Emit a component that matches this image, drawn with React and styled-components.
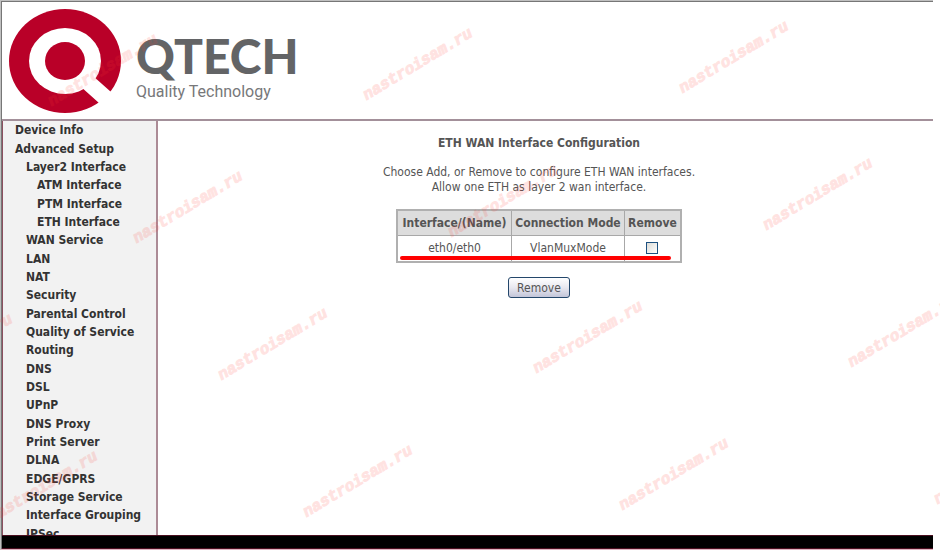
// App.jsx
import React, { useState } from "react";
import styled, { createGlobalStyle } from "styled-components";

const GlobalStyle = createGlobalStyle`
  * {
    box-sizing: border-box;
  }
  body {
    margin: 0;
    background: #ffffff;
    color: #555555;
    font-family: Tahoma, "DejaVu Sans Condensed", "DejaVu Sans", sans-serif;
    font-size: 12px;
  }
`;

const Page = styled.div`
  position: relative;
  display: flex;
  flex-direction: column;
  height: 100vh;
  padding-right: 7px;
  overflow: hidden;
`;

const Frame = styled.div`
  display: flex;
  flex: 1;
  flex-direction: column;
  min-height: 0;
  border-top: 1px solid #c0c0c0;
  border-left: 1px solid #c0c0c0;
  border-bottom: 1px solid #dfb3bf;
`;

const FrameInner = styled.div`
  display: flex;
  flex: 1;
  flex-direction: column;
  min-height: 0;
  border-top: 1px solid #777777;
  border-left: 1px solid #777777;
`;

const Header = styled.header`
  display: flex;
  gap: 14px;
  height: 119px;
  padding: 7px 6px 4px;
  border-bottom: 2px solid #a3909a;
`;

const Mark = styled.svg`
  width: 114px;
  height: 106px;
`;

const Brand = styled.div`
  display: flex;
  flex-direction: column;
  padding-top: 23px;
  color: #636466;
`;

const BrandName = styled.div`
  font: 900 48px/48px Lato, sans-serif;
`;

const Tagline = styled.div`
  font: 400 16px/24px Roboto, sans-serif;
  color: #77787a;
`;

const Body = styled.div`
  display: flex;
  flex: 1;
  min-height: 0;
`;

const Sidebar = styled.nav`
  flex: 0 0 156px;
  overflow: hidden;
  background: #f2f2f2;
  border-left: 1px solid #8c5060;
  border-right: 2px solid #ac8b96;
`;

const Menu = styled.ul`
  display: grid;
  grid-auto-rows: 1fr;
  align-items: center;
  min-height: 422px;
  margin: 0;
  padding: 0 0 0 12px;
  list-style: none;
`;

const MenuItem = styled.li`
  padding-left: ${(props) => props.$level * 11}px;
`;

const MenuLink = styled.a`
  display: block;
  color: #333333;
  font-weight: bold;
  line-height: 18px;
  text-decoration: none;
  white-space: nowrap;
`;

const Content = styled.main`
  display: flex;
  flex: 1;
  flex-direction: column;
  align-items: center;
  padding: 14px 13px 0 0;
`;

const Title = styled.h1`
  margin: 0;
  font-size: 12px;
  line-height: 16px;
`;

const Intro = styled.p`
  margin: 14px 0;
  line-height: 15px;
  text-align: center;
`;

const TableWrap = styled.div`
  position: relative;
`;

const Table = styled.table`
  border-collapse: collapse;
  border: 2px solid #b0b0b0;
  text-align: center;
`;

const HeadCell = styled.th`
  min-width: ${(props) => props.$width}px;
  height: 25px;
  padding: 0 3px;
  background: #dddddd;
  border: 1px solid #a8a8a8;
`;

const Cell = styled.td`
  height: 27px;
  padding: 0 3px;
  border: 1px solid #a8a8a8;
`;

const Check = styled.input`
  appearance: none;
  display: block;
  width: 12px;
  height: 12px;
  margin: 0 auto;
  border: 1px solid #1d5180;
  background: linear-gradient(135deg, #dcdcd7, #ffffff);
  &:checked {
    background: #21a121;
  }
`;

// red marker line drawn over the bottom of the table
const Underline = styled.div`
  position: absolute;
  left: 4px;
  right: 11px;
  bottom: 3px;
  height: 4px;
  border-radius: 2px;
  background: #ff0000;
`;

const Button = styled.button`
  height: 21px;
  margin-top: 14px;
  padding: 0 8px;
  border: 1px solid #24476b;
  border-radius: 3px;
  background: linear-gradient(#ffffff, #e8e8f0 50%, #c3c5d8);
  color: #555555;
  font: inherit;
`;

const Footer = styled.footer`
  height: 14px;
  background: #000000;
  border-top: 1px solid #4a0f20;
  border-bottom: 1px solid #4a0f20;
`;

const Watermarks = styled.svg`
  position: absolute;
  top: 0;
  left: 0;
  width: 100%;
  height: 100%;
  pointer-events: none;
  opacity: 0.14;
  text {
    fill: #ff3c32;
    stroke: #ff3c32;
    stroke-width: 1px;
    font: italic bold 16px "Liberation Mono", monospace;
    text-anchor: middle;
  }
`;

const menu = [
  ["Device Info", 0],
  ["Advanced Setup", 0],
  ["Layer2 Interface", 1],
  ["ATM Interface", 2],
  ["PTM Interface", 2],
  ["ETH Interface", 2],
  ["WAN Service", 1],
  ["LAN", 1],
  ["NAT", 1],
  ["Security", 1],
  ["Parental Control", 1],
  ["Quality of Service", 1],
  ["Routing", 1],
  ["DNS", 1],
  ["DSL", 1],
  ["UPnP", 1],
  ["DNS Proxy", 1],
  ["Print Server", 1],
  ["DLNA", 1],
  ["EDGE/GPRS", 1],
  ["Storage Service", 1],
  ["Interface Grouping", 1],
  ["IPSec", 1],
];

const marks = [
  [105, 74],
  [420, 68],
  [736, 61],
  [190, 211],
  [505, 205],
  [820, 198],
  [-40, 354],
  [275, 348],
  [590, 341],
  [905, 335],
  [45, 491],
  [360, 485],
  [676, 478],
  [991, 472],
];

const Logo = () => (
  <Mark viewBox="0 0 114 106" role="img" aria-label="QTECH">
    <ellipse cx="57" cy="52" rx="56" ry="52" fill="#b90028" />
    <ellipse cx="57" cy="52" rx="36" ry="33" fill="#ffffff" />
    <ellipse cx="57" cy="52" rx="20" ry="19" fill="#b90028" />
    <path d="M72 77 L91 94 L99 103 L114 93 L103 83 L85 67 Z" fill="#ffffff" />
  </Mark>
);

const App = () => {
  const [checked, setChecked] = useState(false);

  return (
    <>
      <GlobalStyle />
      <Page>
        <Frame>
          <FrameInner>
            <Header>
              <Logo />
              <Brand>
                <BrandName>QTECH</BrandName>
                <Tagline>Quality Technology</Tagline>
              </Brand>
            </Header>
            <Body>
              <Sidebar>
                <Menu>
                  {menu.map(([label, level]) => (
                    <MenuItem key={label} $level={level}>
                      <MenuLink href="#">{label}</MenuLink>
                    </MenuItem>
                  ))}
                </Menu>
              </Sidebar>
              <Content>
                <Title>ETH WAN Interface Configuration</Title>
                <Intro>
                  Choose Add, or Remove to configure ETH WAN interfaces.
                  <br />
                  Allow one ETH as layer 2 wan interface.
                </Intro>
                <TableWrap>
                  <Table>
                    <thead>
                      <tr>
                        <HeadCell $width={115}>Interface/(Name)</HeadCell>
                        <HeadCell $width={111}>Connection Mode</HeadCell>
                        <HeadCell $width={57}>Remove</HeadCell>
                      </tr>
                    </thead>
                    <tbody>
                      <tr>
                        <Cell>eth0/eth0</Cell>
                        <Cell>VlanMuxMode</Cell>
                        <Cell>
                          <Check
                            type="checkbox"
                            aria-label="Remove eth0/eth0"
                            checked={checked}
                            onChange={(e) => setChecked(e.target.checked)}
                          />
                        </Cell>
                      </tr>
                    </tbody>
                  </Table>
                  <Underline />
                </TableWrap>
                <Button type="button">Remove</Button>
              </Content>
            </Body>
            <Footer />
          </FrameInner>
        </Frame>
        <Watermarks aria-hidden="true">
          {marks.map(([x, y]) => (
            <text key={`${x}-${y}`} transform={`translate(${x} ${y}) rotate(-31)`}>
              nastroisam.ru
            </text>
          ))}
        </Watermarks>
      </Page>
    </>
  );
};

export default App;
